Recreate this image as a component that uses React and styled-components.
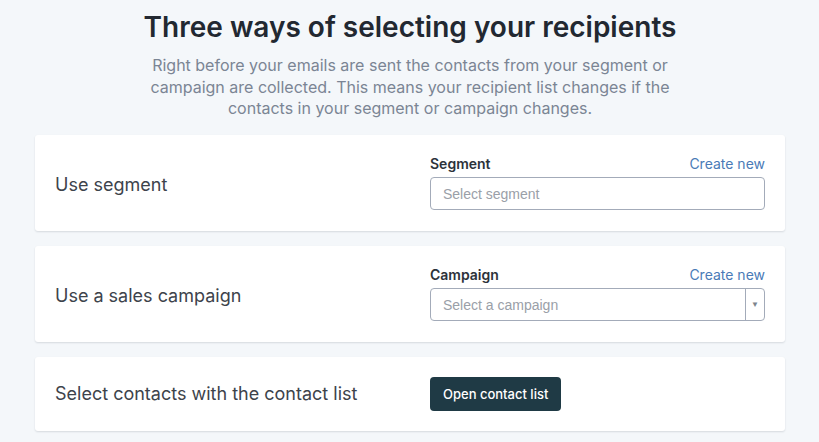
import React from 'react'
import styled, { createGlobalStyle } from 'styled-components'

const GlobalStyle = createGlobalStyle`
  body {
    margin: 0;
    background: #f4f7fa;
    font-family: Inter, "Noto Sans", sans-serif;
  }
`

const Page = styled.div`
  width: 819px;
  height: 442px;
  overflow: hidden;
  padding: 9px 34px 0 35px;
  box-sizing: border-box;
`

const Header = styled.div`
  text-align: center;
  margin-bottom: 15px;
`

const Title = styled.h1`
  margin: 0;
  font-size: 28px;
  font-weight: 600;
  color: #222831;
  line-height: 36px;
`

const Lead = styled.p`
  margin: 10px auto 0;
  width: 540px;
  font-size: 16px;
  line-height: 21.5px;
  color: #7b8594;
`

const Stack = styled.div`
  display: flex;
  flex-direction: column;
  gap: 15px;
`

const Card = styled.div`
  background: #fff;
  border-radius: 3px;
  box-shadow: 0 1px 2px rgba(30, 40, 60, 0.14);
  display: grid;
  grid-template-columns: 1fr 335px;
  align-items: center;
  padding: 20px;
  min-height: ${p => (p.$compact ? '74px' : '96px')};
  box-sizing: border-box;
`

const Option = styled.div`
  font-size: 18px;
  color: #3d434b;
  padding-top: ${p => (p.$offset ? '3px' : '0')};
`

const Field = styled.div`
  display: flex;
  flex-direction: column;
`

const FieldHead = styled.div`
  display: flex;
  justify-content: space-between;
  align-items: baseline;
  margin-bottom: 5px;
`

const Label = styled.span`
  font-size: 14px;
  font-weight: 600;
  color: #2c323a;
`

const Link = styled.a`
  font-size: 14px;
  color: #4a7bb7;
  text-decoration: none;
  cursor: pointer;
`

const Input = styled.div`
  height: 33px;
  box-sizing: border-box;
  border: 1px solid #a3abb9;
  border-radius: 4px;
  display: flex;
  align-items: stretch;
  font-family: "Liberation Sans", Arial, sans-serif;
  font-size: 14px;
  color: #9aa0a8;
`

const Placeholder = styled.span`
  flex: 1;
  display: flex;
  align-items: center;
  padding-left: 12px;
`

const Caret = styled.span`
  width: 18px;
  border-left: 1px solid #a3abb9;
  display: flex;
  align-items: center;
  justify-content: center;
  font-size: 8px;
  color: #7d848d;
`

const Button = styled.button`
  justify-self: start;
  background: #1f3a45;
  color: #fff;
  border: none;
  border-radius: 4px;
  height: 34px;
  padding: 0 13px;
  font-family: Inter, sans-serif;
  font-size: 13px;
  font-weight: 500;
  cursor: pointer;
`

const App = () => {
  return (
    <>
      <GlobalStyle />
      <Page>
        <Header>
          <Title>Three ways of selecting your recipients</Title>
          <Lead>
            Right before your emails are sent the contacts from your segment or campaign are
            collected. This means your recipient list changes if the contacts in your segment or
            campaign changes.
          </Lead>
        </Header>
        <Stack>
          <Card>
            <Option $offset>Use segment</Option>
            <Field>
              <FieldHead>
                <Label>Segment</Label>
                <Link>Create new</Link>
              </FieldHead>
              <Input>
                <Placeholder>Select segment</Placeholder>
              </Input>
            </Field>
          </Card>
          <Card>
            <Option $offset>Use a sales campaign</Option>
            <Field>
              <FieldHead>
                <Label>Campaign</Label>
                <Link>Create new</Link>
              </FieldHead>
              <Input>
                <Placeholder>Select a campaign</Placeholder>
                <Caret>▼</Caret>
              </Input>
            </Field>
          </Card>
          <Card $compact>
            <Option>Select contacts with the contact list</Option>
            <Button>Open contact list</Button>
          </Card>
        </Stack>
      </Page>
    </>
  )
}

export default App
